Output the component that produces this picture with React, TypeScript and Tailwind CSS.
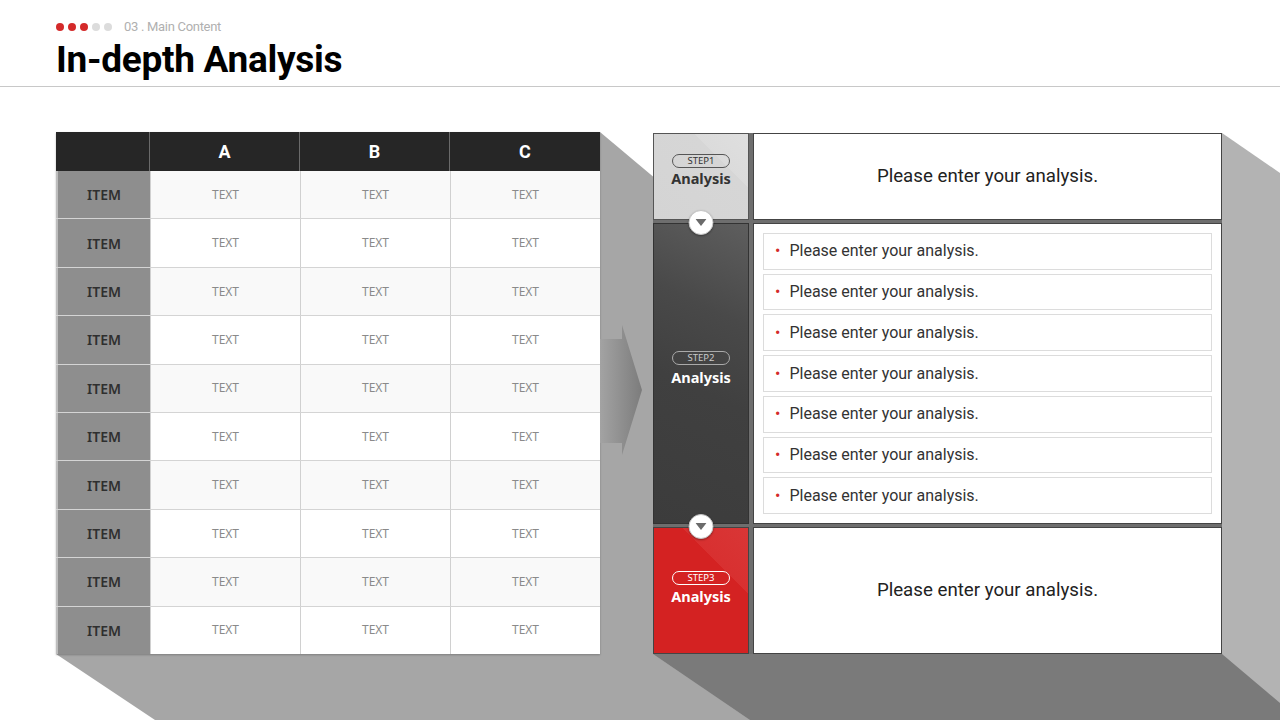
import { Fragment } from "react";

const rows = Array.from({ length: 10 });
const bullets = Array.from({ length: 7 });

function DownButton() {
  return (
    <div className="absolute -top-[14px] left-1/2 -translate-x-1/2 z-20 w-[25px] h-[25px] rounded-full bg-white border border-[#c4c4c4] shadow-[0_1px_2px_rgba(0,0,0,0.35)] flex items-center justify-center">
      <svg width="11" height="7" viewBox="0 0 11 7">
        <polygon points="0,0 11,0 5.5,7" fill="#6b6b6b" />
      </svg>
    </div>
  );
}

export default function App() {
  return (
    <div className="relative w-[1280px] h-[720px] overflow-hidden bg-white font-['Roboto',sans-serif]">
      {/* long shadows behind the table and the step panel */}
      <svg className="absolute inset-0 z-0" width="1280" height="720" viewBox="0 0 1280 720">
        <polygon points="56,654 600,132 1300,720 155,720" fill="#a6a6a6" />
        <polygon points="653,654 1222,133 1280,173 1280,720 750,720" fill="#b3b3b3" />
        <polygon points="653,654 1222,654 1300,720 750,720" fill="#7a7a7a" />
      </svg>

      <div className="relative z-10">
        {/* header */}
        <div className="px-[56px] pt-[20px]">
          <div className="flex items-center h-[14px]">
            <div className="flex items-center gap-[4px]">
              <span className="w-[8px] h-[8px] rounded-full bg-[#d42a2a]" />
              <span className="w-[8px] h-[8px] rounded-full bg-[#d42a2a]" />
              <span className="w-[8px] h-[8px] rounded-full bg-[#d42a2a]" />
              <span className="w-[8px] h-[8px] rounded-full bg-[#dcdcdc]" />
              <span className="w-[8px] h-[8px] rounded-full bg-[#dcdcdc]" />
            </div>
            <span className="ml-[12px] text-[13px] text-[#b0b0b0] tracking-[-0.3px]">03 . Main Content</span>
          </div>
          <h1 className="mt-[4px] text-[37px] leading-[44px] font-bold text-black tracking-[-0.3px]">In-depth Analysis</h1>
        </div>
        <div className="mt-[4px] h-px bg-[#c8c8c8]" />

        {/* main */}
        <div className="flex pl-[56px] pt-[45px]">
          {/* table */}
          <div className="w-[544px] flex flex-col shadow-[0_1px_2px_rgba(0,0,0,0.25)]">
            <div className="grid grid-cols-[94px_150px_150px_150px] h-[39px] bg-[#262626] text-white text-[18px] font-bold">
              <div className="border-r border-[#6a6a6a]" />
              <div className="flex items-center justify-center border-r border-[#6a6a6a]">A</div>
              <div className="flex items-center justify-center border-r border-[#6a6a6a]">B</div>
              <div className="flex items-center justify-center">C</div>
            </div>
            <div className="h-[483px] flex flex-col font-['Noto_Sans',sans-serif]">
              {rows.map((_, i) => (
                <div
                  key={i}
                  className={`flex-1 grid grid-cols-[94px_150px_150px_150px] ${i > 0 ? "border-t border-[#d4d4d4]" : ""} ${i % 2 === 0 ? "bg-[#f9f9f9]" : "bg-white"}`}
                >
                  <div className="flex items-center justify-center bg-[#8e8e8e] border-l-2 border-[#bdbdbd] text-[14px] font-semibold text-[#2f2f2f]">
                    ITEM
                  </div>
                  {["a", "b", "c"].map((c) => (
                    <Fragment key={c}>
                      <div className="flex items-center justify-center border-l border-[#d0d0d0] text-[12px] text-[#8a8a8a]">TEXT</div>
                    </Fragment>
                  ))}
                </div>
              ))}
            </div>
          </div>

          {/* arrow */}
          <div className="w-[53px] relative">
            <svg className="absolute left-0 top-0" width="53" height="522" viewBox="0 0 53 522">
              <defs>
                <linearGradient id="arr" x1="0" y1="0" x2="1" y2="0">
                  <stop offset="0" stopColor="#a3a3a3" />
                  <stop offset="1" stopColor="#7c7c7c" />
                </linearGradient>
              </defs>
              <polygon points="0,207 22,207 22,193 42,258 22,323 22,311 0,311" fill="url(#arr)" />
            </svg>
          </div>

          {/* steps panel */}
          <div className="mt-[1px] w-[569px] h-[521px] grid grid-cols-[96px_469px] grid-rows-[87px_301px_127px] gap-x-[4px] gap-y-[3px] bg-[#6e6e6e] font-['Noto_Sans',sans-serif]">
            <div className="relative border border-[#555] bg-[linear-gradient(225deg,#dfdfdf_0%,#dbdbdb_30%,#d6d6d6_30%,#d4d4d4_100%)] flex flex-col items-center justify-center pb-[13px]">
              <div className="w-[58px] h-[14px] rounded-full border border-[#555] text-[9.5px] leading-none text-[#333] flex items-center justify-center">STEP1</div>
              <div className="mt-[1px] text-[14.5px] leading-[18px] font-bold text-[#333]">Analysis</div>
            </div>
            <div className="border border-[#444] bg-white flex items-center justify-center font-['Roboto',sans-serif] text-[18.7px] text-[#222]">
              Please enter your analysis.
            </div>

            <div className="relative border border-[#333] bg-[linear-gradient(205deg,#5e5e5e_0%,#494949_30%,#404040_55%,#3c3c3c_100%)] flex flex-col items-center justify-center pb-[10px]">
              <DownButton />
              <div className="w-[58px] h-[14px] rounded-full border border-[#aaa] text-[9.5px] leading-none text-[#c8c8c8] flex items-center justify-center">STEP2</div>
              <div className="mt-[3px] text-[14.5px] leading-[18px] font-bold text-white">Analysis</div>
            </div>
            <div className="border border-[#444] bg-white flex flex-col gap-[4px] px-[9px] py-[9px] font-['Roboto',sans-serif]">
              {bullets.map((_, i) => (
                <div key={i} className="flex-1 border border-[#dcdcdc] flex items-center pl-[11px]">
                  <span className="text-[16px] leading-none text-[#d42a2a] mr-[9px]">•</span>
                  <span className="text-[16px] text-[#333]">Please enter your analysis.</span>
                </div>
              ))}
            </div>

            <div className="relative border border-[#444] bg-[linear-gradient(225deg,#d93636_0%,#d83030_30%,#d42222_30%,#d42222_100%)] flex flex-col items-center justify-center pb-[6px]">
              <DownButton />
              <div className="w-[58px] h-[14px] rounded-full border border-white text-[9.5px] leading-none text-white flex items-center justify-center">STEP3</div>
              <div className="mt-[2px] text-[14.5px] leading-[18px] font-bold text-white">Analysis</div>
            </div>
            <div className="border border-[#444] bg-white flex items-center justify-center font-['Roboto',sans-serif] text-[18.7px] text-[#222]">
              Please enter your analysis.
            </div>
          </div>
        </div>
      </div>
    </div>
  );
}
